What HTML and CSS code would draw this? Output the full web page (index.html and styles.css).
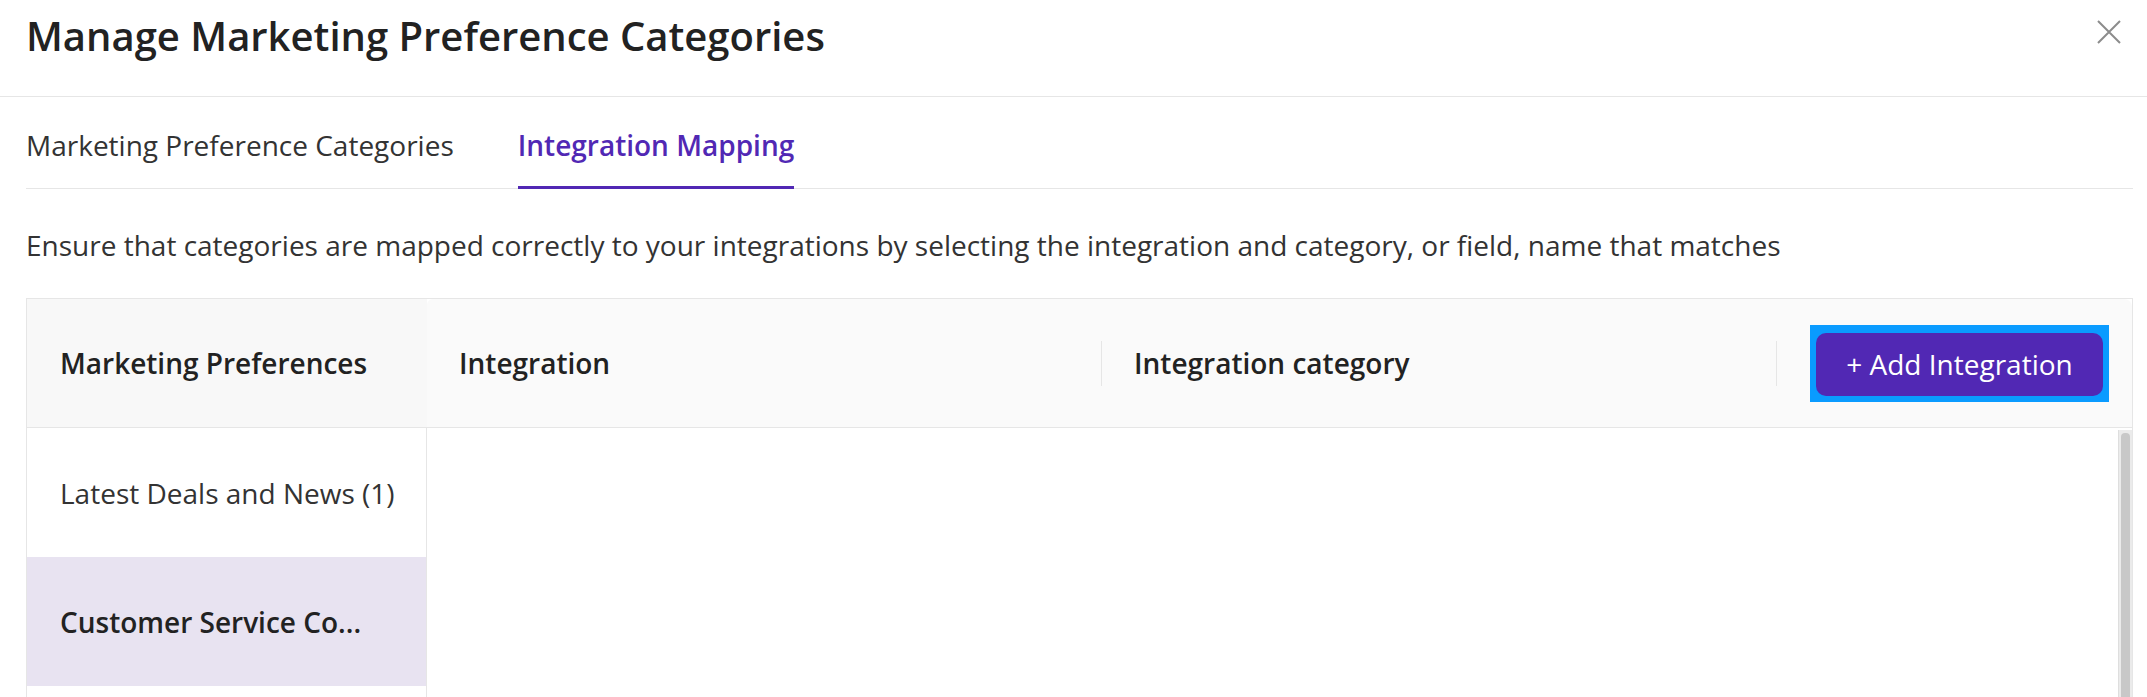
FILE: index.html
```html
<!DOCTYPE html>
<html lang="en">

<head>
    <meta charset="UTF-8">
    <meta name="viewport" content="width=device-width, initial-scale=1.0">
    <title>Manage Marketing Preference Categories</title>
    <link rel="stylesheet" href="styles.css">
</head>

<body>
    <div class="modal">
        <header class="modal-head">
            <h1>Manage Marketing Preference Categories</h1>
            <button type="button" class="close" aria-label="Close">
                <svg width="24" height="24" viewBox="0 0 24 24">
                    <path d="M1 1 L23 23 M23 1 L1 23" stroke="#8c8c8c" stroke-width="2" fill="none" />
                </svg>
            </button>
        </header>

        <div class="modal-body">
            <nav class="tabs">
                <a class="tab" href="#">Marketing Preference Categories</a>
                <a class="tab active" href="#">Integration Mapping</a>
            </nav>

            <p class="hint">Ensure that categories are mapped correctly to your integrations by selecting the integration and category, or field, name that matches</p>

            <div class="mapping">
                <!-- 왼쪽: 마케팅 수신 항목 -->
                <aside class="prefs">
                    <div class="prefs-head">Marketing Preferences</div>
                    <ul class="prefs-list">
                        <li>Latest Deals and News (1)</li>
                        <li class="selected">Customer Service Co...</li>
                        <li></li>
                    </ul>
                </aside>

                <!-- 오른쪽: 연동 매핑 -->
                <section class="grid">
                    <div class="grid-head">
                        <div class="col">Integration</div>
                        <div class="col">Integration category</div>
                        <div class="actions">
                            <span class="focus-ring">
                                <button type="button" class="add-btn">+ Add Integration</button>
                            </span>
                        </div>
                    </div>
                    <div class="grid-body">
                        <div class="rows"></div>
                        <div class="scrollbar"><div class="thumb"></div></div>
                    </div>
                </section>
            </div>
        </div>
    </div>
</body>

</html>
```

FILE: styles.css
```css
* {
    margin: 0;
    padding: 0;
    box-sizing: border-box;
}

html,
body {
    height: 100%;
    overflow: hidden;
}

body {
    font-family: 'Open Sans', 'Noto Sans', sans-serif;
    color: #333;
    background: #fff;
}

a {
    color: #333;
    text-decoration: none;
}

button {
    font-family: inherit;
    border: none;
    background: none;
    cursor: pointer;
}

/* header */
.modal-head {
    height: 97px;
    display: flex;
    justify-content: space-between;
    align-items: flex-start;
    padding: 12px 26px 0 26px;
    border-bottom: 1px solid #e6e6e6;
}

.modal-head h1 {
    font-size: 40px;
    line-height: 48px;
    font-weight: 600;
    color: #222;
}

.close {
    margin-top: 8px;
    width: 24px;
    height: 24px;
    display: block;
}

.close svg {
    display: block;
}

.modal-body {
    padding: 0 14px 0 26px;
}

/* tabs */
.tabs {
    display: flex;
    gap: 64px;
    padding-top: 30px;
    border-bottom: 1px solid #e6e6e6;
}

.tab {
    font-size: 28px;
    line-height: 36px;
    padding-bottom: 23px;
    border-bottom: 3px solid transparent;
    margin-bottom: -1px;
    color: #333;
}

.tab.active {
    color: #5128b4;
    font-weight: 600;
    border-bottom-color: #5128b4;
}

.hint {
    font-size: 28px;
    line-height: 36px;
    margin-top: 38px;
    color: #333;
}

/* mapping table */
.mapping {
    margin-top: 35px;
    display: flex;
    height: 500px;
    border: 1px solid #e6e6e6;
}

.prefs {
    width: 400px;
    flex-shrink: 0;
}

.prefs-head {
    height: 129px;
    display: flex;
    align-items: center;
    padding-left: 33px;
    background: #f8f8f8;
    border-bottom: 1px solid #e6e6e6;
    font-size: 28px;
    font-weight: 600;
    color: #222;
}

.prefs-list {
    list-style: none;
    border-right: 1px solid #e6e6e6;
    height: 370px;
}

.prefs-list li {
    height: 129px;
    display: flex;
    align-items: center;
    padding-left: 33px;
    font-size: 28px;
    color: #333;
}

.prefs-list li.selected {
    background: #e8e3f1;
    font-weight: 600;
    color: #222;
}

.grid {
    flex: 1;
    min-width: 0;
    display: flex;
    flex-direction: column;
}

.grid-head {
    height: 129px;
    display: flex;
    align-items: center;
    background: #fafafa;
    border-bottom: 1px solid #e6e6e6;
    border-top-left-radius: 6px;
    border-top-right-radius: 8px;
}

.grid-head .col {
    flex: 0 0 675px;
    padding-left: 32px;
    font-size: 28px;
    font-weight: 600;
    color: #222;
    border-right: 1px solid #e6e6e6;
    line-height: 45px;
}

.grid-head .actions {
    flex: 1;
    min-width: 0;
    display: flex;
    justify-content: flex-end;
    padding-right: 23px;
}

.focus-ring {
    display: block;
    background: #0a9bff;
    padding: 8px 6px 6px 6px;
}

.add-btn {
    display: block;
    width: 287px;
    height: 63px;
    background: #5128b4;
    color: #fff;
    border-radius: 10px;
    font-size: 28px;
    font-weight: 400;
}

.grid-body {
    flex: 1;
    display: flex;
}

.rows {
    flex: 1;
}

.scrollbar {
    width: 14px;
    margin-top: 2px;
    background: #ebebeb;
    border-left: 1px solid #dedede;
    padding: 3px 2px 0 2px;
}

.thumb {
    height: 300px;
    background: #c8c8c8;
    border-radius: 4px;
}
```
